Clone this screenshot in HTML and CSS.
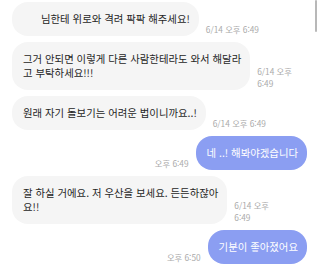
FILE: index.html
```html
<!DOCTYPE html>
<html lang="ko">
<head>
    <meta charset="UTF-8">
    <meta name="viewport" content="width=device-width, initial-scale=1.0">
    <title>채팅</title>
    <link rel="stylesheet" href="styles.css">
</head>
<body>

<div class="chat">
    <!-- 받은 메시지 -->
    <div class="row in">
        <div class="bubble"><span class="name-blank"></span>님한테 위로와 격려 팍팍 해주세요!</div>
        <div class="time">6/14 오후 6:49</div>
    </div>

    <div class="row in">
        <div class="bubble">그거 안되면 이렇게 다른 사람한테라도 와서 해달라<br>고 부탁하세요!!!</div>
        <div class="time">6/14 오후<br>6:49</div>
    </div>

    <div class="row in">
        <div class="bubble">원래 자기 돌보기는 어려운 법이니까요..!</div>
        <div class="time">6/14 오후 6:49</div>
    </div>

    <!-- 보낸 메시지 -->
    <div class="row out">
        <div class="time">오후 6:49</div>
        <div class="bubble">네 ..! 해봐야겠습니다</div>
    </div>

    <div class="row in">
        <div class="bubble">잘 하실 거에요. 저 우산을 보세요. 든든하잖아<br>요!!</div>
        <div class="time">6/14 오후<br>6:49</div>
    </div>

    <div class="row out">
        <div class="time">오후 6:50</div>
        <div class="bubble">기분이 좋아졌어요</div>
    </div>

    <div class="scroll-thumb"></div>
</div>

</body>
</html>
```

FILE: styles.css
```css
body {
    margin: 0;
    background-color: #ffffff;
    font-family: 'Noto Sans CJK KR', 'Noto Sans', sans-serif;
    color: #333333;
}

.chat {
    position: relative;
    display: flex;
    flex-direction: column;
    gap: 6px;
    padding: 2px 13px 0 12px;
    height: 266px;
    box-sizing: border-box;
    overflow: hidden;
}

.row {
    display: flex;
    align-items: flex-end;
    gap: 7px;
}

.row.out {
    justify-content: flex-end;
}

.bubble {
    padding: 10px 9px 10px 11px;
    border-radius: 16px;
    font-size: 10.4px;
    line-height: 14px;
    white-space: nowrap;
}

.row.in .bubble {
    background-color: #f5f5f5;
    color: #262626;
}

.row.out .bubble {
    background-color: #8b9ef2;
    color: #ffffff;
    padding-left: 11px;
}

.name-blank {
    display: inline-block;
    width: 18px;
}

.time {
    font-size: 8.3px;
    line-height: 12px;
    color: #ababab;
    white-space: nowrap;
    margin-bottom: 1px;
}

.scroll-thumb {
    position: absolute;
    top: 0;
    right: 3px;
    width: 2px;
    height: 32px;
    background-color: #b8b8b8;
    border-radius: 1px;
}
```
